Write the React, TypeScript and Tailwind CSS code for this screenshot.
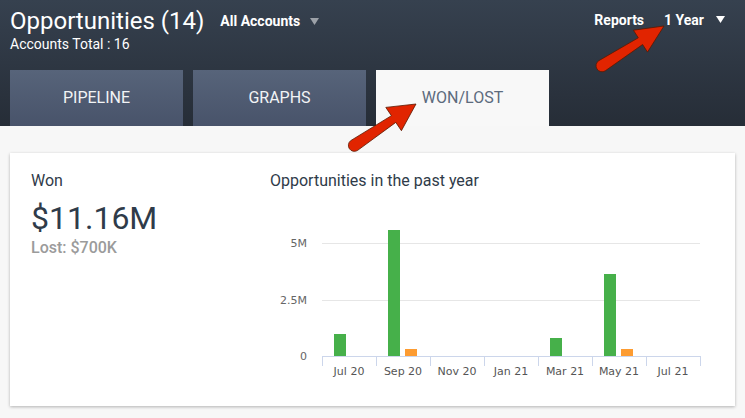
// Opportunities — Won/Lost view

type Pt = [number, number]

// Builds a fat arrow outline (rounded tail, triangular head) between two points
function arrowPath(tail: Pt, tip: Pt, headLen: number, headHalf: number, neckHalf: number, tailHalf: number) {
  const dx = tip[0] - tail[0]
  const dy = tip[1] - tail[1]
  const len = Math.hypot(dx, dy)
  const ux = dx / len
  const uy = dy / len
  const nx = -uy
  const ny = ux
  const bx = tip[0] - ux * headLen
  const by = tip[1] - uy * headLen
  const cx = tail[0] + ux * tailHalf
  const cy = tail[1] + uy * tailHalf
  const p = (x: number, y: number) => `${x.toFixed(1)} ${y.toFixed(1)}`
  return [
    `M ${p(tip[0], tip[1])}`,
    `L ${p(bx + nx * headHalf, by + ny * headHalf)}`,
    `L ${p(bx + nx * neckHalf, by + ny * neckHalf)}`,
    `L ${p(cx + nx * tailHalf, cy + ny * tailHalf)}`,
    `A ${tailHalf} ${tailHalf} 0 0 1 ${p(cx - nx * tailHalf, cy - ny * tailHalf)}`,
    `L ${p(bx - nx * neckHalf, by - ny * neckHalf)}`,
    `L ${p(bx - nx * headHalf, by - ny * headHalf)}`,
    'Z',
  ].join(' ')
}

function Caret({ color }: { color: string }) {
  return (
    <svg width="9" height="7" viewBox="0 0 9 7">
      <polygon points="0,0 9,0 4.5,7" fill={color} />
    </svg>
  )
}

// ---------------------------------------------------------------------------
// Chart
// ---------------------------------------------------------------------------

const months = ['Jul 20', 'Sep 20', 'Nov 20', 'Jan 21', 'Mar 21', 'May 21', 'Jul 21']
// bar heights in px (won / lost)
const won = [22, 126, 0, 0, 18, 82, 0]
const lost = [0, 7, 0, 0, 0, 7, 0]

const X0 = 52
const STEP = 54
const BASE = 156

function WonLostChart() {
  return (
    <svg width="440" height="190" viewBox="0 0 440 190" style={{ fontFamily: '"DejaVu Sans", Verdana, sans-serif' }}>
      <line x1={X0} x2={430} y1={43.5} y2={43.5} stroke="#e6e6e6" />
      <line x1={X0} x2={430} y1={100.5} y2={100.5} stroke="#e6e6e6" />
      <g fill="#666666" fontSize="11" textAnchor="end">
        <text x="37" y="47">5M</text>
        <text x="37" y="104">2.5M</text>
        <text x="37" y="160">0</text>
      </g>
      {months.map((m, i) => {
        const s = X0 + STEP * i
        return (
          <g key={m}>
            {won[i] > 0 && <rect x={s + 12} y={BASE - won[i]} width="12" height={won[i]} fill="#46b04a" />}
            {lost[i] > 0 && <rect x={s + 29} y={BASE - lost[i]} width="12" height={lost[i]} fill="#fd9c31" />}
            <text x={s + 27} y="175" fontSize="11" fill="#555555" textAnchor="middle">{m}</text>
          </g>
        )
      })}
      <line x1={X0} x2={430} y1={BASE + 0.5} y2={BASE + 0.5} stroke="#ccd6eb" />
      {months.concat(['end']).map((m, i) => (
        <line key={m + i} x1={X0 + STEP * i + 0.5} x2={X0 + STEP * i + 0.5} y1={BASE} y2={BASE + 10} stroke="#ccd6eb" />
      ))}
    </svg>
  )
}

// ---------------------------------------------------------------------------
// Tabs
// ---------------------------------------------------------------------------

function Tab({ label, active = false }: { label: string; active?: boolean }) {
  return (
    <div
      className={
        active
          ? 'w-[173px] h-[56px] flex items-center justify-center bg-[#f8f8f8] text-[#5c6b7d] text-[16px]'
          : 'w-[173px] h-[56px] flex items-center justify-center bg-linear-to-b from-[#57647a] to-[#48536a] text-[#f2f4f6] text-[16px]'
      }
    >
      {label}
    </div>
  )
}

export default function App() {
  return (
    <div className="relative w-[745px] h-[418px] overflow-hidden bg-[#f7f7f7]" style={{ fontFamily: 'Roboto, "Liberation Sans", sans-serif' }}>
      {/* Header */}
      <div className="h-[126px] flex flex-col bg-linear-to-b from-[#36414f] to-[#262d37]">
        <div className="h-[70px] flex justify-between pl-[10px] pr-[20px]">
          <div className="flex flex-col pt-[7px]">
            <div className="flex items-center">
              <span className="text-[24px] leading-[28px] text-white">Opportunities (14)</span>
              <span className="ml-[16px] text-[14px] leading-[16px] font-bold text-white">All Accounts</span>
              <span className="ml-[10px]"><Caret color="#9ca1a8" /></span>
            </div>
            <span className="mt-[1px] text-[14px] leading-[16px] text-white">Accounts Total : 16</span>
          </div>
          <div className="flex items-start pt-[12px]">
            <span className="text-[14px] leading-[16px] font-bold text-white">Reports</span>
            <span className="ml-[20px] text-[14px] leading-[16px] font-bold text-white">1 Year</span>
            <span className="ml-[12px] mt-[4px]"><Caret color="#ffffff" /></span>
          </div>
        </div>
        <div className="flex gap-[10px] pl-[10px]">
          <Tab label="PIPELINE" />
          <Tab label="GRAPHS" />
          <Tab label="WON/LOST" active />
        </div>
      </div>

      {/* Body */}
      <div className="px-[10px] pt-[27px]">
        <div className="h-[253px] bg-white shadow-[0_1px_3px_rgba(0,0,0,0.28)] flex pt-[18px]">
          <div className="w-[260px] pl-[21px] flex flex-col">
            <span className="text-[16px] leading-[20px] text-[#2f3b49]">Won</span>
            <span className="mt-[9px] text-[32px] leading-[36px] text-[#2f3b49]">$11.16M</span>
            <span className="mt-[2px] text-[16px] leading-[20px] font-medium text-[#9b9b9b]">Lost: $700K</span>
          </div>
          <div className="flex flex-col">
            <span className="text-[16px] leading-[20px] text-[#2f3b49]">Opportunities in the past year</span>
            <div className="mt-[9px]">
              <WonLostChart />
            </div>
          </div>
        </div>
      </div>

      {/* Annotation arrows */}
      <svg className="absolute inset-0 pointer-events-none" width="745" height="418" viewBox="0 0 745 418">
        <path d={arrowPath([349, 149], [416, 104], 27, 14, 4, 6)} fill="#e12400" stroke="#5c1800" strokeWidth="0.8" />
        <path d={arrowPath([597, 69], [664, 26], 28, 13, 4, 6)} fill="#e12400" stroke="#5c1800" strokeWidth="0.8" />
      </svg>
    </div>
  )
}
